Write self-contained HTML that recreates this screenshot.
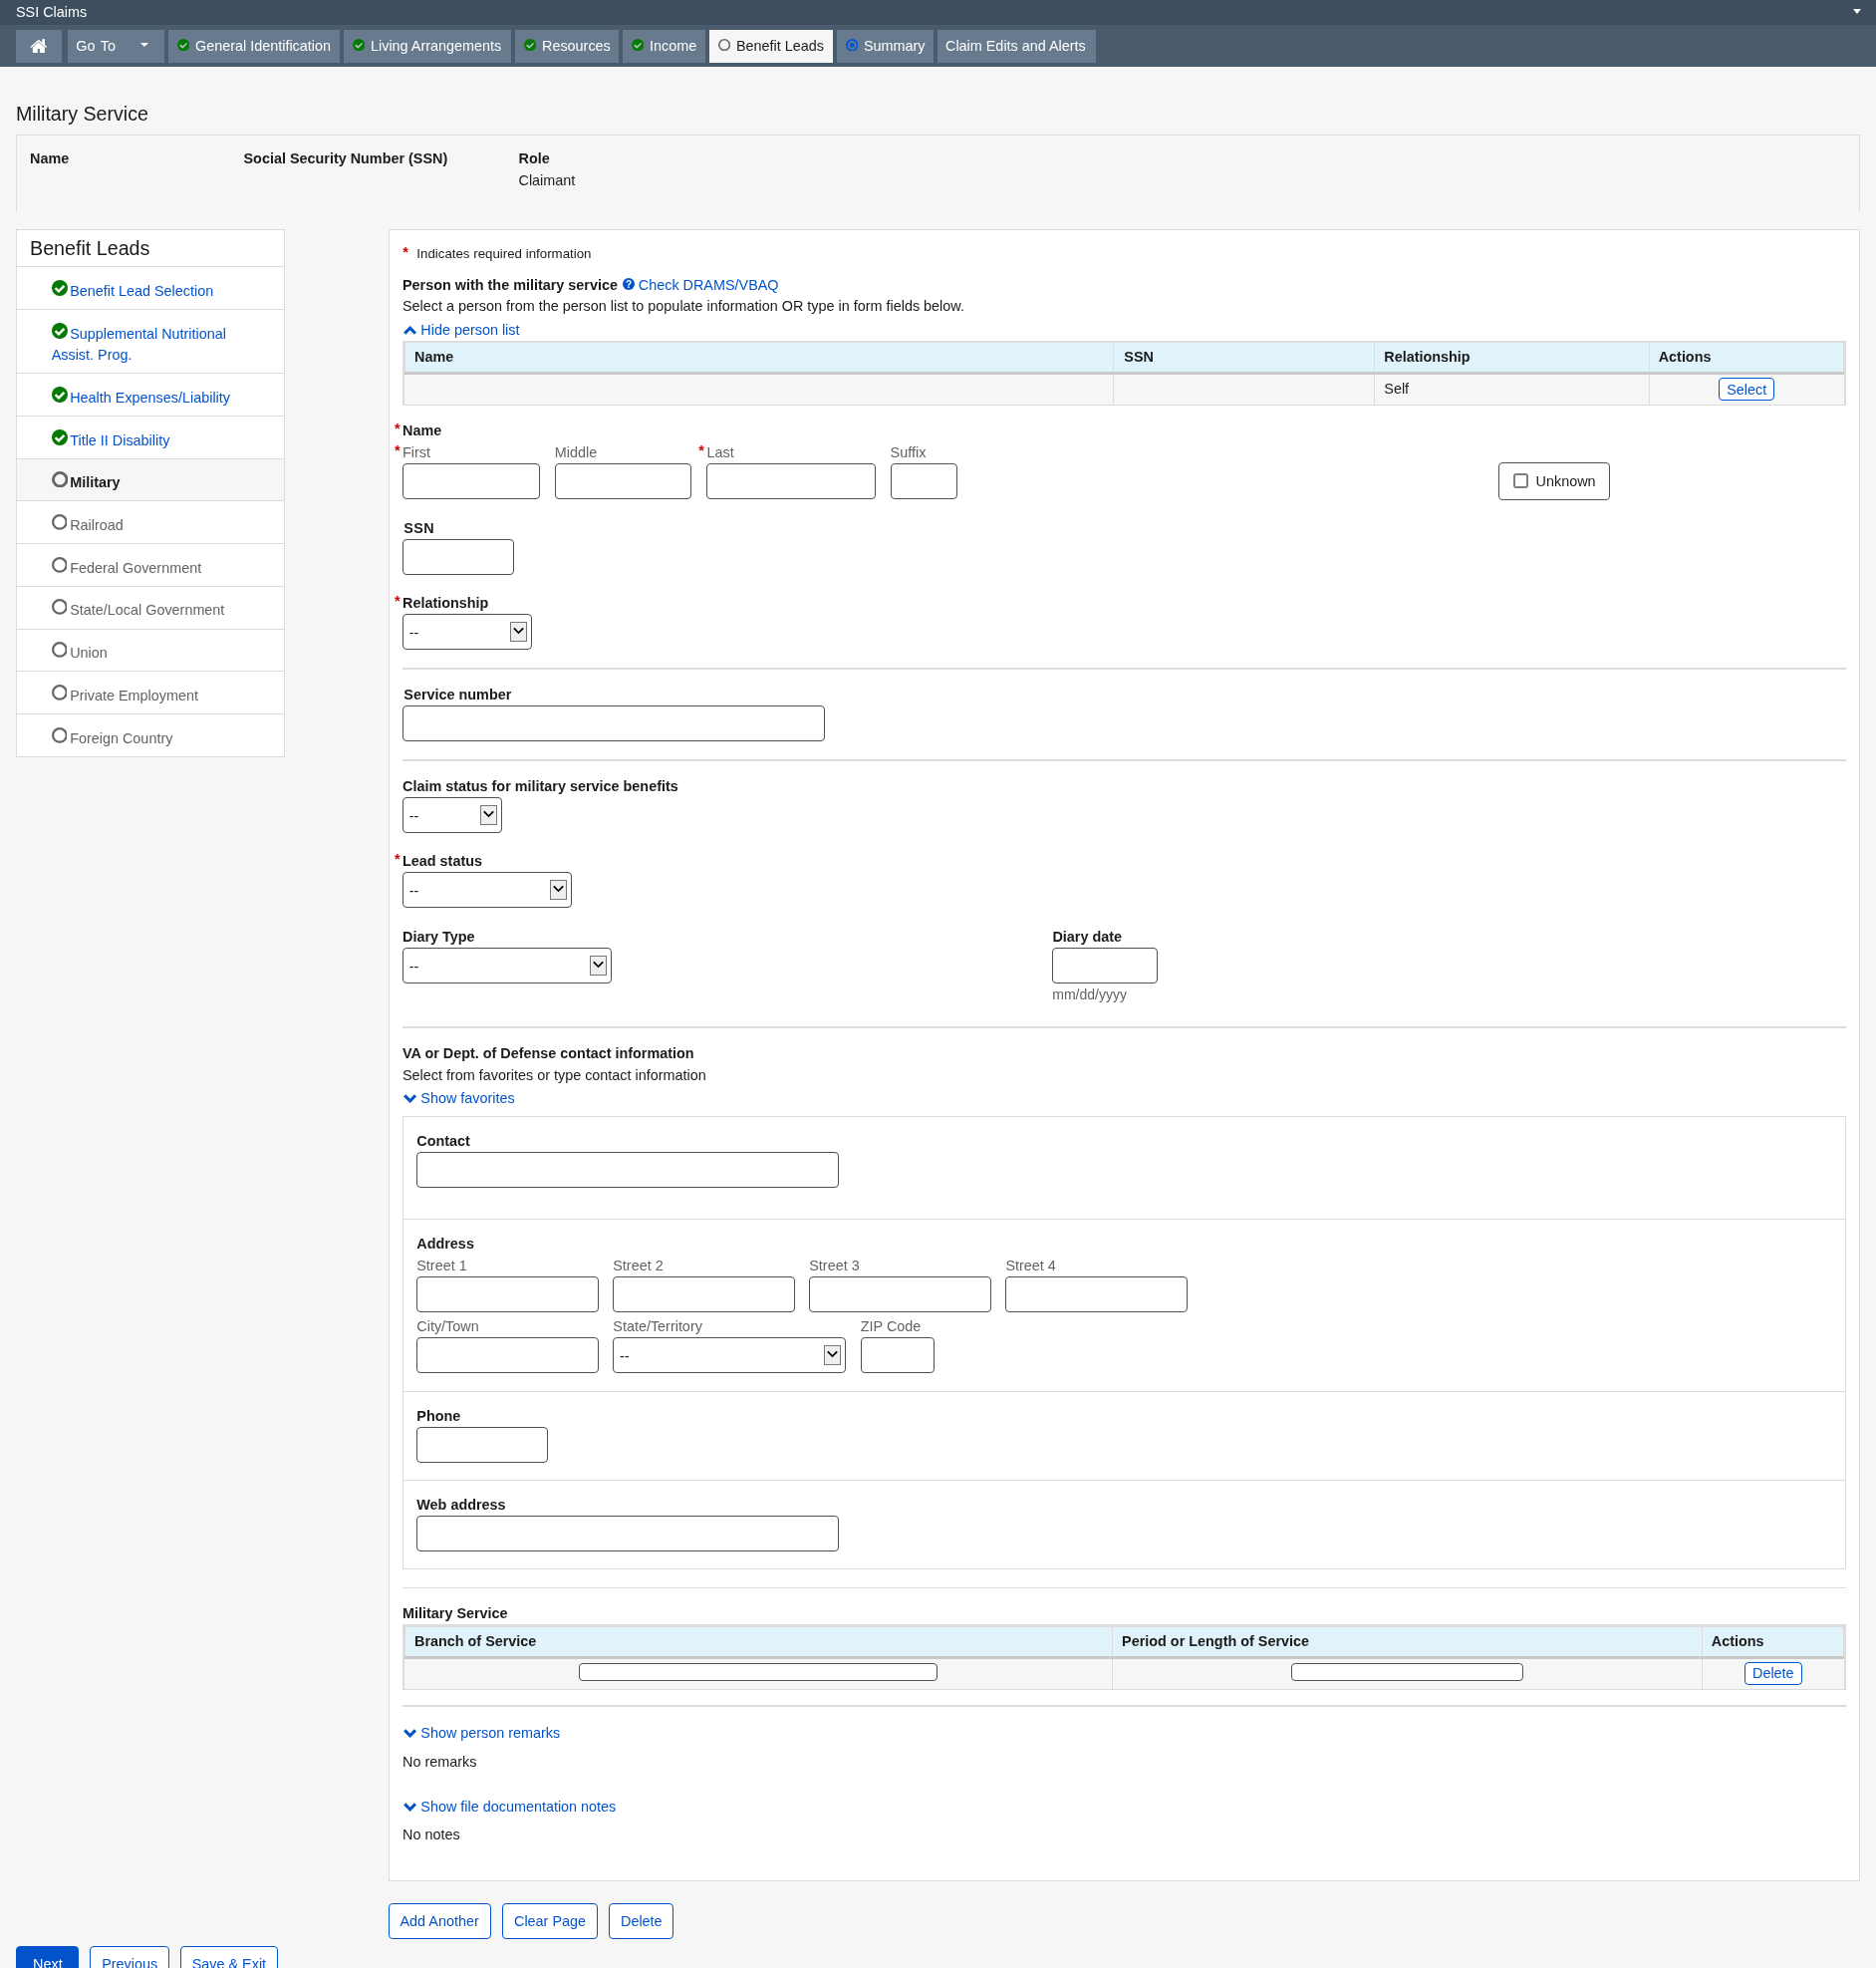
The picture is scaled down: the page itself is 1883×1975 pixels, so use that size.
<!DOCTYPE html>
<html lang="en">
<head>
<meta charset="utf-8">
<title>SSI Claims - Military Service</title>
<style>
*{box-sizing:border-box}
html,body{margin:0;padding:0}
body{width:1883px;height:1975px;overflow:hidden;background:#f6f6f6;font-family:"Liberation Sans",Arial,sans-serif;font-size:14.4px;line-height:21.6px;color:#1b1b1b;position:relative}
a{color:#0353cc;text-decoration:none}
.a{position:absolute;white-space:nowrap}
.b{font-weight:700}
.g{color:#636363}
.r{color:#cd0007;font-weight:700}
.topbar{position:absolute;left:0;top:0;width:1883px;height:25px;background:#3e4e5e;color:#fff}
.car{position:absolute;width:0;height:0;border-left:4.3px solid transparent;border-right:4.3px solid transparent;border-top:4.9px solid #fff}
.nav{position:absolute;left:0;top:25px;width:1883px;height:42px;background:#4a5b6e}
.nb{position:absolute;top:30px;height:33px;background:#677a8e;color:#fff;line-height:33px;white-space:nowrap}
.nb.act{background:#f6f6f6;color:#1b1b1b}
.nb svg{position:absolute}
.nb span{position:absolute;top:6px;line-height:21.6px}
h1{position:absolute;left:16px;top:100px;margin:0;font-weight:400;font-size:19.6px;line-height:28px;white-space:nowrap}
.info{position:absolute;left:16px;top:135px;width:1851px;height:77px;border:1px solid #dcdcdc;border-bottom:none}
.side{position:absolute;left:16px;top:230px;width:270px;background:#fff;border:1px solid #dcdcdc}
.side .hd{height:36.3px;font-size:19.8px;line-height:36px;padding-left:13.5px}
.side .it{border-top:1px solid #dcdcdc;padding:10.08px 20px 10.08px 34.7px;position:relative;color:#5c5c5c}
.side .it.cur{background:#f6f6f6;color:#1b1b1b;font-weight:700}
.side .it svg{position:relative;top:1px;margin-right:2.5px;vertical-align:baseline}
.main{position:absolute;left:390px;top:230px;width:1477px;height:1658px;background:#fff;border:1px solid #dcdcdc}
.inp{position:absolute;height:35.7px;background:#fff;border:1px solid #505050;border-radius:4px}
.sin{position:absolute;height:17.5px;background:#fff;border:1px solid #505050;border-radius:4px}
.sel{position:absolute;height:35.7px;background:#fff;border:1px solid #505050;border-radius:4px}
.sel i{position:absolute;left:5.7px;top:8px;font-style:normal;line-height:21.6px;font-size:14.4px}
.sel u{position:absolute;right:4px;top:7px;width:17px;height:19.7px;background:#efefef;border:1px solid #767676;text-decoration:none}
.sel u svg{position:absolute;left:2px;top:4px}
.hr{position:absolute;left:404px;width:1448.5px;height:2px;background:#dcdcdc}
.btn{position:absolute;border:1px solid #0353cc;border-radius:4px;color:#0353cc;background:#fff;text-align:center;white-space:nowrap}
.tbl{position:absolute;left:404px;width:1448.5px;border:2px solid #dcdcdc;background:#f6f6f6}
.th{position:absolute;height:28.3px;background:#e1f3fa;font-weight:700;line-height:28px}
.th span{position:absolute;top:0}
.hb{position:absolute;left:404px;width:1448.5px;height:3px;background:#c9c9c9}
.vd{position:absolute;width:1px;background:#dcdcdc}
.box{position:absolute;left:404px;width:1448.5px;border:1px solid #dcdcdc}
.dv{position:absolute;left:405px;width:1446.5px;height:1px;background:#dcdcdc}
</style>
</head>
<body>
<div id="page" style="position:absolute;left:0;top:0;width:1883px;height:1975px;will-change:transform">

<div class="topbar"></div><div class="a" style="left:16px;top:2px;color:#fff">SSI Claims</div><div class="car" style="left:1859.5px;top:8.9px;border-left-width:4.6px;border-right-width:4.6px;border-top-width:5.3px"></div>
<div class="nav"></div><div class="a" style="left:0;top:67px;width:1883px;height:1px;background:#fff"></div>
<div class="nb" style="left:16px;width:46px"><svg style="left:14px;top:9px" width="18" height="15" viewBox="0 0 18 15"><path d="M0.4 7.9 L8.8 0.7 L12.3 3.7 V0.3 H15 V6 L17.2 7.9 L16.2 9 L8.8 2.8 L1.4 9 Z" fill="#fff"/><path d="M2.8 8.5 L8.8 3.4 L14.9 8.5 V14.1 H9.9 V10.1 H7.8 V14.1 H2.8 Z" fill="#fff"/></svg></div>
<div class="nb" style="left:68px;width:97px"><span style="left:8.3px;word-spacing:1.6px">Go To</span><div class="car" style="left:72.9px;top:13px"></div></div>
<div class="nb" style="left:169px;width:172px"><svg style="left:8.7px;top:8.9px" width="12.2" height="12.2" viewBox="0 0 16 16"><circle cx="8" cy="8" r="8" fill="#067a06"/><path d="M3.6 8.1 L6.9 11.3 L12.4 5.8" fill="none" stroke="#b4c4c4" stroke-width="2.0"/></svg><span style="left:27px">General Identification</span></div>
<div class="nb" style="left:345px;width:168px"><svg style="left:8.7px;top:8.9px" width="12.2" height="12.2" viewBox="0 0 16 16"><circle cx="8" cy="8" r="8" fill="#067a06"/><path d="M3.6 8.1 L6.9 11.3 L12.4 5.8" fill="none" stroke="#b4c4c4" stroke-width="2.0"/></svg><span style="left:27px">Living Arrangements</span></div>
<div class="nb" style="left:517px;width:104px"><svg style="left:8.7px;top:8.9px" width="12.2" height="12.2" viewBox="0 0 16 16"><circle cx="8" cy="8" r="8" fill="#067a06"/><path d="M3.6 8.1 L6.9 11.3 L12.4 5.8" fill="none" stroke="#b4c4c4" stroke-width="2.0"/></svg><span style="left:27px">Resources</span></div>
<div class="nb" style="left:625px;width:83px"><svg style="left:8.7px;top:8.9px" width="12.2" height="12.2" viewBox="0 0 16 16"><circle cx="8" cy="8" r="8" fill="#067a06"/><path d="M3.6 8.1 L6.9 11.3 L12.4 5.8" fill="none" stroke="#b4c4c4" stroke-width="2.0"/></svg><span style="left:27px">Income</span></div>
<div class="nb act" style="left:712px;width:124px"><svg style="left:8.7px;top:8.9px" width="12.2" height="12.2" viewBox="0 0 16 16"><circle cx="8" cy="8" r="6.95" fill="none" stroke="#6b6b6b" stroke-width="2.1"/></svg><span style="left:27px">Benefit Leads</span></div>
<div class="nb" style="left:840px;width:97px"><svg style="left:8.7px;top:8.9px" width="12.6" height="12.6" viewBox="0 0 16 16"><circle cx="8" cy="8" r="6.75" fill="none" stroke="#0355d4" stroke-width="2.4"/><circle cx="8" cy="8" r="3.2" fill="#0355d4"/></svg><span style="left:27px">Summary</span></div>
<div class="nb" style="left:941px;width:159px"><span style="left:8px">Claim Edits and Alerts</span></div>
<h1>Military Service</h1>
<div class="info"></div>
<div class="a b" style="left:30px;top:149px">Name</div>
<div class="a b" style="left:244.5px;top:149px">Social Security Number (SSN)</div>
<div class="a b" style="left:520.5px;top:149px">Role</div>
<div class="a" style="left:520.5px;top:171px">Claimant</div>
<div class="side" style="height:530px"></div>
<div class="a" style="left:30px;top:231px;font-size:19.7px;line-height:36px">Benefit Leads</div>
<div class="a" style="left:17px;top:267px;width:268px;height:1px;background:#dcdcdc"></div>
<div class="a" style="left:17px;top:310px;width:268px;height:1px;background:#dcdcdc"></div>
<div class="a" style="left:17px;top:374px;width:268px;height:1px;background:#dcdcdc"></div>
<div class="a" style="left:17px;top:417px;width:268px;height:1px;background:#dcdcdc"></div>
<div class="a" style="left:17px;top:460px;width:268px;height:1px;background:#dcdcdc"></div>
<div class="a" style="left:17px;top:502px;width:268px;height:1px;background:#dcdcdc"></div>
<div class="a" style="left:17px;top:545px;width:268px;height:1px;background:#dcdcdc"></div>
<div class="a" style="left:17px;top:588px;width:268px;height:1px;background:#dcdcdc"></div>
<div class="a" style="left:17px;top:631px;width:268px;height:1px;background:#dcdcdc"></div>
<div class="a" style="left:17px;top:673px;width:268px;height:1px;background:#dcdcdc"></div>
<div class="a" style="left:17px;top:716px;width:268px;height:1px;background:#dcdcdc"></div>
<div class="a" style="left:17px;top:461px;width:268px;height:41px;background:#f6f6f6"></div>
<div class="a" style="left:51.7px;top:281.1px;line-height:0"><svg width="16" height="16" viewBox="0 0 16 16"><circle cx="8" cy="8" r="8" fill="#067a06"/><path d="M3.6 8.1 L6.9 11.3 L12.4 5.8" fill="none" stroke="#fff" stroke-width="2.4"/></svg></div>
<div class="a " style="left:70.2px;top:282px"><a>Benefit Lead Selection</a></div>
<div class="a" style="left:51.7px;top:324.4px;line-height:0"><svg width="16" height="16" viewBox="0 0 16 16"><circle cx="8" cy="8" r="8" fill="#067a06"/><path d="M3.6 8.1 L6.9 11.3 L12.4 5.8" fill="none" stroke="#fff" stroke-width="2.4"/></svg></div>
<div class="a " style="left:70.2px;top:325px"><a>Supplemental Nutritional</a></div>
<div class="a" style="left:51.7px;top:346px"><a>Assist. Prog.</a></div>
<div class="a" style="left:51.7px;top:388.1px;line-height:0"><svg width="16" height="16" viewBox="0 0 16 16"><circle cx="8" cy="8" r="8" fill="#067a06"/><path d="M3.6 8.1 L6.9 11.3 L12.4 5.8" fill="none" stroke="#fff" stroke-width="2.4"/></svg></div>
<div class="a " style="left:70.2px;top:389px"><a>Health Expenses/Liability</a></div>
<div class="a" style="left:51.7px;top:431.0px;line-height:0"><svg width="16" height="16" viewBox="0 0 16 16"><circle cx="8" cy="8" r="8" fill="#067a06"/><path d="M3.6 8.1 L6.9 11.3 L12.4 5.8" fill="none" stroke="#fff" stroke-width="2.4"/></svg></div>
<div class="a " style="left:70.2px;top:432px"><a>Title II Disability</a></div>
<div class="a" style="left:51.7px;top:473px;line-height:0"><svg width="16.4" height="16.4" viewBox="0 0 16 16"><circle cx="8" cy="8" r="6.6" fill="none" stroke="#666" stroke-width="2.8"/></svg></div>
<div class="a b" style="left:70.2px;top:474px">Military</div>
<div class="a" style="left:51.7px;top:516.0px;line-height:0"><svg width="15.8" height="15.8" viewBox="0 0 16 16"><circle cx="8" cy="8" r="6.875" fill="none" stroke="#666" stroke-width="2.25"/></svg></div>
<div class="a g" style="left:70.2px;top:517px">Railroad</div>
<div class="a" style="left:51.7px;top:559.1px;line-height:0"><svg width="15.8" height="15.8" viewBox="0 0 16 16"><circle cx="8" cy="8" r="6.875" fill="none" stroke="#666" stroke-width="2.25"/></svg></div>
<div class="a g" style="left:70.2px;top:560px">Federal Government</div>
<div class="a" style="left:51.7px;top:601.2px;line-height:0"><svg width="15.8" height="15.8" viewBox="0 0 16 16"><circle cx="8" cy="8" r="6.875" fill="none" stroke="#666" stroke-width="2.25"/></svg></div>
<div class="a g" style="left:70.2px;top:602px">State/Local Government</div>
<div class="a" style="left:51.7px;top:644.1px;line-height:0"><svg width="15.8" height="15.8" viewBox="0 0 16 16"><circle cx="8" cy="8" r="6.875" fill="none" stroke="#666" stroke-width="2.25"/></svg></div>
<div class="a g" style="left:70.2px;top:645px">Union</div>
<div class="a" style="left:51.7px;top:687.1px;line-height:0"><svg width="15.8" height="15.8" viewBox="0 0 16 16"><circle cx="8" cy="8" r="6.875" fill="none" stroke="#666" stroke-width="2.25"/></svg></div>
<div class="a g" style="left:70.2px;top:688px">Private Employment</div>
<div class="a" style="left:51.7px;top:730.1px;line-height:0"><svg width="15.8" height="15.8" viewBox="0 0 16 16"><circle cx="8" cy="8" r="6.875" fill="none" stroke="#666" stroke-width="2.25"/></svg></div>
<div class="a g" style="left:70.2px;top:731px">Foreign Country</div>
<div class="main"></div>
<div class="a r" style="left:404.3px;top:243px">*</div>
<div class="a " style="left:418.3px;top:244px;font-size:13.3px">Indicates required information</div>
<div class="a b" style="left:404px;top:276px;">Person with the military service</div>
<svg class="a" style="left:624.8px;top:279.1px" width="12" height="12" viewBox="0 0 12 12"><circle cx="6" cy="6" r="6" fill="#0353cc"/><text x="6" y="9.6" text-anchor="middle" font-family="Liberation Sans" font-weight="700" font-size="10" fill="#fff">?</text></svg>
<div class="a " style="left:640.8px;top:276px;"><a>Check DRAMS/VBAQ</a></div>
<div class="a " style="left:404px;top:297px;">Select a person from the person list to populate information OR type in form fields below.</div>
<div class="a" style="left:404.9px;top:324.8px;line-height:0"><svg width="13.2" height="13" viewBox="0 0 13.2 13"><path d="M1.2 9.6 L6.6 4.2 L12 9.6" fill="none" stroke="#0353cc" stroke-width="3.1"/></svg></div>
<div class="a " style="left:422.3px;top:321px;"><a>Hide person list</a></div>
<div class="a" style="left:404.2px;top:342.4px;width:1448.7px;height:64.4px;background:#dcdcdc"></div>
<div class="a" style="left:406px;top:375.8px;width:1445px;height:30.1px;background:#f6f6f6"></div>
<div class="a" style="left:407px;top:344px;width:1442.8px;height:29.3px;background:#e1f3fa"></div>
<div class="a" style="left:406px;top:373.3px;width:1445px;height:2.6px;background:#c9c9c9"></div>
<div class="vd" style="left:1117px;top:344px;height:29.3px"></div>
<div class="vd" style="left:1117px;top:375.9px;height:30px"></div>
<div class="vd" style="left:1379px;top:344px;height:29.3px"></div>
<div class="vd" style="left:1379px;top:375.9px;height:30px"></div>
<div class="vd" style="left:1655px;top:344px;height:29.3px"></div>
<div class="vd" style="left:1655px;top:375.9px;height:30px"></div>
<div class="a b" style="left:416px;top:348px;">Name</div>
<div class="a b" style="left:1128.3px;top:348px;">SSN</div>
<div class="a b" style="left:1389.3px;top:348px;">Relationship</div>
<div class="a b" style="left:1664.7px;top:348px;">Actions</div>
<div class="a " style="left:1389.3px;top:380px;">Self</div>
<div class="btn" style="left:1725px;top:379px;width:56px;height:23px"></div>
<div class="a " style="left:1733.2px;top:381px;"><a>Select</a></div>
<div class="a r" style="left:396px;top:420px">*</div>
<div class="a b" style="left:404px;top:422px;">Name</div>
<div class="a r" style="left:396px;top:442px">*</div>
<div class="a g" style="left:404px;top:444px;">First</div>
<div class="a g" style="left:556.8px;top:444px;">Middle</div>
<div class="a r" style="left:701.3px;top:442px">*</div>
<div class="a g" style="left:709.5px;top:444px;">Last</div>
<div class="a g" style="left:893.6px;top:444px;">Suffix</div>
<div class="inp" style="left:404.1px;top:465px;width:137.9px"></div>
<div class="inp" style="left:556.8px;top:465px;width:137.2px"></div>
<div class="inp" style="left:708.8px;top:465px;width:170.2px"></div>
<div class="inp" style="left:893.6px;top:465px;width:67.4px"></div>
<div class="a" style="left:1504px;top:464px;width:112px;height:38px;border:1px solid #505050;border-radius:4px;background:#fff"></div>
<div class="a" style="left:1519px;top:475.3px;width:14.5px;height:14.5px;border:2px solid #7d7d7d;border-radius:3px;background:#fff"></div>
<div class="a " style="left:1541.6px;top:473px;">Unknown</div>
<div class="a b" style="left:405.3px;top:520px;letter-spacing:0.4px">SSN</div>
<div class="inp" style="left:404.1px;top:541px;width:111.7px"></div>
<div class="a r" style="left:396px;top:593px">*</div>
<div class="a b" style="left:404px;top:595px;">Relationship</div>
<div class="sel" style="left:404.1px;top:616px;width:129.7px"><i>--</i><u><svg width="11" height="9" viewBox="0 0 11 9"><path d="M0.8 1.4 L5.5 6.1 L10.2 1.4" fill="none" stroke="#000" stroke-width="1.8"/></svg></u></div>
<div class="hr" style="top:670.25px"></div>
<div class="a b" style="left:405.3px;top:687px;">Service number</div>
<div class="inp" style="left:404.1px;top:708px;width:423.7px"></div>
<div class="hr" style="top:761.5px"></div>
<div class="a b" style="left:404px;top:779px;">Claim status for military service benefits</div>
<div class="sel" style="left:404.1px;top:800.25px;width:99.9px"><i>--</i><u><svg width="11" height="9" viewBox="0 0 11 9"><path d="M0.8 1.4 L5.5 6.1 L10.2 1.4" fill="none" stroke="#000" stroke-width="1.8"/></svg></u></div>
<div class="a r" style="left:396px;top:852px">*</div>
<div class="a b" style="left:404px;top:854px;">Lead status</div>
<div class="sel" style="left:404.1px;top:875.25px;width:169.7px"><i>--</i><u><svg width="11" height="9" viewBox="0 0 11 9"><path d="M0.8 1.4 L5.5 6.1 L10.2 1.4" fill="none" stroke="#000" stroke-width="1.8"/></svg></u></div>
<div class="a b" style="left:404px;top:930px;">Diary Type</div>
<div class="sel" style="left:404.1px;top:951.25px;width:209.7px"><i>--</i><u><svg width="11" height="9" viewBox="0 0 11 9"><path d="M0.8 1.4 L5.5 6.1 L10.2 1.4" fill="none" stroke="#000" stroke-width="1.8"/></svg></u></div>
<div class="a b" style="left:1056.4px;top:930px;">Diary date</div>
<div class="inp" style="left:1056.2px;top:951.1px;width:105.8px"></div>
<div class="a g" style="left:1056.3px;top:988px;font-size:14px">mm/dd/yyyy</div>
<div class="hr" style="top:1030.25px"></div>
<div class="a b" style="left:404px;top:1047px;">VA or Dept. of Defense contact information</div>
<div class="a " style="left:404px;top:1069px;">Select from favorites or type contact information</div>
<div class="a" style="left:404.9px;top:1095.9px;line-height:0"><svg width="13.2" height="13" viewBox="0 0 13.2 13"><path d="M1.2 3.4 L6.6 8.8 L12 3.4" fill="none" stroke="#0353cc" stroke-width="3.1"/></svg></div>
<div class="a " style="left:422.3px;top:1092px;"><a>Show favorites</a></div>
<div class="box" style="top:1120px;height:455px"></div>
<div class="a b" style="left:418.3px;top:1135px;">Contact</div>
<div class="inp" style="left:418.25px;top:1156.25px;width:423.5px"></div>
<div class="dv" style="top:1223px"></div>
<div class="a b" style="left:418.3px;top:1238px;">Address</div>
<div class="a g" style="left:418.25px;top:1260px;">Street 1</div>
<div class="inp" style="left:418.25px;top:1281.1px;width:182.6px"></div>
<div class="a g" style="left:615.25px;top:1260px;">Street 2</div>
<div class="inp" style="left:615.25px;top:1281.1px;width:182.6px"></div>
<div class="a g" style="left:812.25px;top:1260px;">Street 3</div>
<div class="inp" style="left:812.25px;top:1281.1px;width:182.6px"></div>
<div class="a g" style="left:1009.4px;top:1260px;">Street 4</div>
<div class="inp" style="left:1009.4px;top:1281.1px;width:182.6px"></div>
<div class="a g" style="left:418.3px;top:1321px;">City/Town</div>
<div class="a g" style="left:615.3px;top:1321px;">State/Territory</div>
<div class="a g" style="left:863.8px;top:1321px;">ZIP Code</div>
<div class="inp" style="left:418.25px;top:1342.25px;width:182.6px"></div>
<div class="sel" style="left:615.25px;top:1342.25px;width:233.5px"><i>--</i><u><svg width="11" height="9" viewBox="0 0 11 9"><path d="M0.8 1.4 L5.5 6.1 L10.2 1.4" fill="none" stroke="#000" stroke-width="1.8"/></svg></u></div>
<div class="inp" style="left:864.2px;top:1342.25px;width:73.8px"></div>
<div class="dv" style="top:1396px"></div>
<div class="a b" style="left:418.3px;top:1411px;">Phone</div>
<div class="inp" style="left:418.25px;top:1432.25px;width:131.5px"></div>
<div class="dv" style="top:1484.8px"></div>
<div class="a b" style="left:418.3px;top:1500px;">Web address</div>
<div class="inp" style="left:418.25px;top:1521.25px;width:423.5px"></div>
<div class="hr" style="top:1593px;height:1px"></div>
<div class="a b" style="left:404px;top:1609px;">Military Service</div>
<div class="a" style="left:404.2px;top:1630.3px;width:1448.7px;height:65.7px;background:#dcdcdc"></div>
<div class="a" style="left:406px;top:1664.9px;width:1445px;height:30.2px;background:#f6f6f6"></div>
<div class="a" style="left:407px;top:1633px;width:1442.8px;height:29.3px;background:#e1f3fa"></div>
<div class="a" style="left:406px;top:1662.3px;width:1445px;height:2.6px;background:#c9c9c9"></div>
<div class="vd" style="left:1116px;top:1633px;height:29.3px"></div>
<div class="vd" style="left:1116px;top:1664.9px;height:30.2px"></div>
<div class="vd" style="left:1708px;top:1633px;height:29.3px"></div>
<div class="vd" style="left:1708px;top:1664.9px;height:30.2px"></div>
<div class="a b" style="left:416px;top:1637px;">Branch of Service</div>
<div class="a b" style="left:1126.1px;top:1637px;">Period or Length of Service</div>
<div class="a b" style="left:1717.8px;top:1637px;">Actions</div>
<div class="sin" style="left:581.3px;top:1669.3px;width:359.5px"></div>
<div class="sin" style="left:1296.1px;top:1669.3px;width:233px"></div>
<div class="btn" style="left:1750.7px;top:1668px;width:58.4px;height:23px"></div>
<div class="a " style="left:1759px;top:1669px;"><a>Delete</a></div>
<div class="hr" style="top:1710.75px"></div>
<div class="a" style="left:404.9px;top:1732.9px;line-height:0"><svg width="13.2" height="13" viewBox="0 0 13.2 13"><path d="M1.2 3.4 L6.6 8.8 L12 3.4" fill="none" stroke="#0353cc" stroke-width="3.1"/></svg></div>
<div class="a " style="left:422.3px;top:1729px;"><a>Show person remarks</a></div>
<div class="a " style="left:404px;top:1758px;">No remarks</div>
<div class="a" style="left:404.9px;top:1806.7px;line-height:0"><svg width="13.2" height="13" viewBox="0 0 13.2 13"><path d="M1.2 3.4 L6.6 8.8 L12 3.4" fill="none" stroke="#0353cc" stroke-width="3.1"/></svg></div>
<div class="a " style="left:422.3px;top:1803px;"><a>Show file documentation notes</a></div>
<div class="a " style="left:404px;top:1831px;">No notes</div>
<div class="btn" style="left:390px;top:1910px;width:102.75px;height:35.75px"></div>
<div class="a " style="left:401.5px;top:1918px;"><a>Add Another</a></div>
<div class="btn" style="left:504px;top:1910px;width:95.75px;height:35.75px"></div>
<div class="a " style="left:516px;top:1918px;"><a>Clear Page</a></div>
<div class="btn" style="left:611px;top:1910px;width:64.75px;height:35.75px"></div>
<div class="a " style="left:623px;top:1918px;"><a>Delete</a></div>
<div class="btn" style="left:16px;top:1953px;width:63px;height:35.75px;background:#0353cc"></div>
<div class="a " style="left:33.1px;top:1961px;color:#fff">Next</div>
<div class="btn" style="left:90.2px;top:1953px;width:80px;height:35.75px"></div>
<div class="a " style="left:102.2px;top:1961px;"><a>Previous</a></div>
<div class="btn" style="left:180.8px;top:1953px;width:98.2px;height:35.75px"></div>
<div class="a " style="left:192.7px;top:1961px;"><a>Save &amp; Exit</a></div>
</div>
</body>
</html>
